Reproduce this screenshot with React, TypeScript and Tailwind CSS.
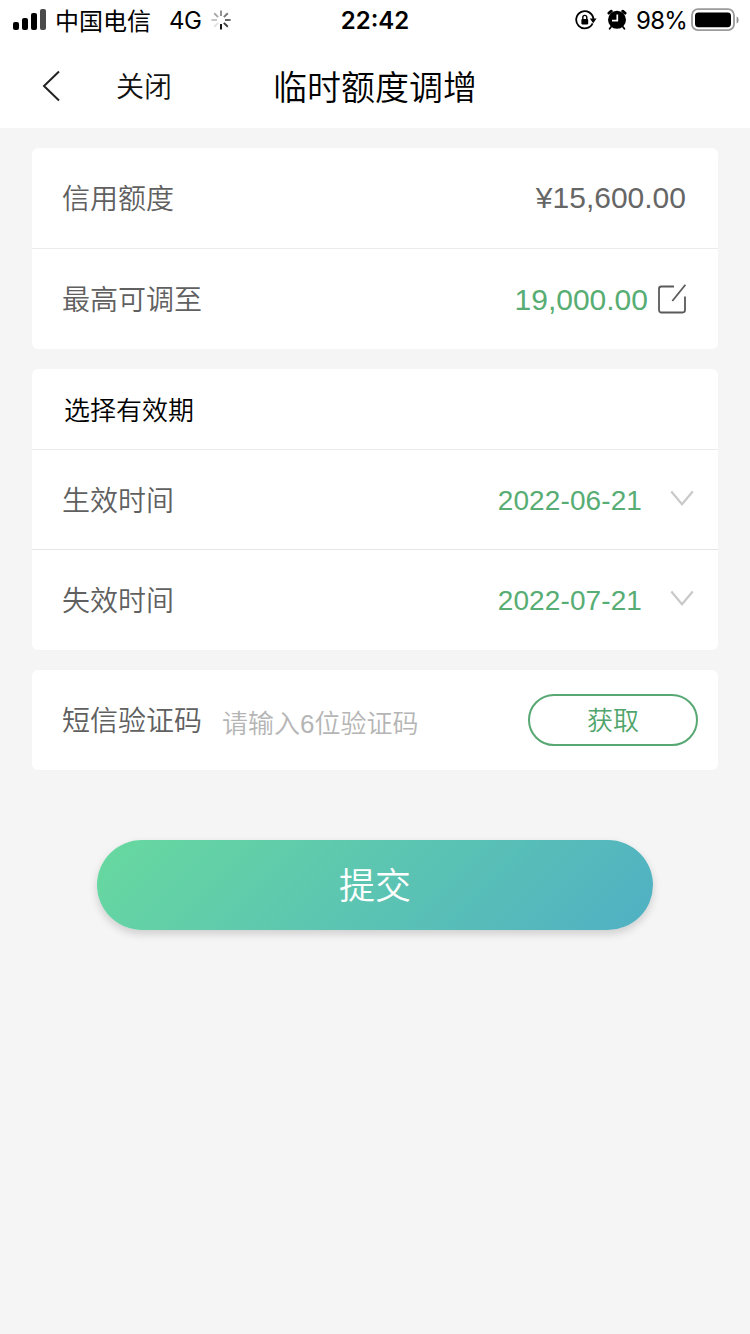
import { JSX, ReactNode } from "react";

// Interface for a date row
interface DateRow {
  id: number;
  label: string;
  value: string;
}

const dateRows: DateRow[] = [
  { id: 1, label: "生效时间", value: "2022-06-21" },
  { id: 2, label: "失效时间", value: "2022-07-21" },
];

// Spokes of the loading spinner, clockwise from the top
const spokes: string[] = [
  "#8e8e8e",
  "#777777",
  "#606060",
  "#3c3c3c",
  "#0a0a0a",
  "#e2e2e2",
  "#c4c4c4",
  "#a8a8a8",
];

function SignalIcon(): JSX.Element {
  return (
    <svg width="34" height="22" viewBox="0 0 34 22" fill="#000">
      <rect x="1" y="13" width="6" height="8" rx="2" />
      <rect x="10" y="9" width="6" height="12" rx="2" />
      <rect x="19" y="4" width="6" height="17" rx="2" />
      <rect x="28" y="0" width="6" height="21" rx="2" fill="#4a4a4a" />
    </svg>
  );
}

function SpinnerIcon(): JSX.Element {
  return (
    <svg width="20" height="20" viewBox="0 0 20 20">
      {spokes.map((color, index) => (
        <line
          key={index}
          x1="10"
          y1="0.4"
          x2="10"
          y2="6"
          stroke={color}
          strokeWidth="1.9"
          transform={`rotate(${index * 45} 10 10)`}
        />
      ))}
    </svg>
  );
}

function RotationLockIcon(): JSX.Element {
  return (
    <svg width="22" height="20" viewBox="0 0 22 20" fill="none">
      <path d="M17.6 13.4A8.600 8.600 0 1 1 18.400 9.200" stroke="#000" strokeWidth="1.800" />
      <path d="M14.800 8.600h6.800l-3.400 4.600z" fill="#000" />
      <rect x="6.400" y="9" width="6.800" height="5.400" rx="0.800" fill="#000" />
      <path d="M7.800 9.400V7.400a2 2 0 0 1 4 0v2" stroke="#000" strokeWidth="1.400" />
    </svg>
  );
}

function AlarmIcon(): JSX.Element {
  return (
    <svg width="20" height="22" viewBox="0 0 20 22" fill="none">
      <circle cx="10" cy="10.800" r="9" fill="#000" />
      <path d="M1.900 4.200 4.300 2.200M18.100 4.200 15.700 2.200" stroke="#000" strokeWidth="2.800" strokeLinecap="round" />
      <path d="m4 18-1.400 1.800M16 18l1.400 1.800" stroke="#000" strokeWidth="1.800" strokeLinecap="round" />
      <path d="M10.300 5.400v6.200H5" stroke="#fff" strokeWidth="1.700" />
    </svg>
  );
}

function BatteryIcon(): JSX.Element {
  return (
    <svg width="49" height="24" viewBox="0 0 49 24" fill="none">
      <rect x="1" y="1.2" width="42" height="21" rx="6" stroke="#9a9a9a" strokeWidth="1.8" />
      <rect x="4" y="4.4" width="36" height="14.8" rx="3.4" fill="#000" />
      <path d="M45.6 8.4c2.6.8 2.6 6.2 0 7z" fill="#8e8e8e" />
    </svg>
  );
}

function EditIcon(): JSX.Element {
  return (
    <svg width="30" height="31" viewBox="0 0 30 31" fill="none" stroke="#5a5a5d" strokeWidth="1.8">
      <path d="M17 2.5H4.400A2.400 2.400 0 0 0 2 4.900v21.200A2.400 2.400 0 0 0 4.400 28.500h21.200a2.400 2.400 0 0 0 2.400-2.400V12.500" />
      <path d="M28.400 0.800 15.300 17" />
    </svg>
  );
}

function ChevronIcon(): JSX.Element {
  return (
    <svg width="24" height="20" viewBox="0 0 24 20" fill="none">
      <path d="M1.300 1.500 12 14.300 22.700 1.500" stroke="#c9c9c9" strokeWidth="2.200" />
    </svg>
  );
}

function Label({ children }: { children: ReactNode }): JSX.Element {
  return <span className="pt-1 text-[28px] leading-10 text-[#606060]">{children}</span>;
}

export default function App(): JSX.Element {
  return (
    <div className="w-[750px] h-[1334px] bg-[#f5f5f5] overflow-hidden font-['Liberation_Sans','Noto_Sans_CJK_SC',sans-serif] font-[350]">
      {/* Status bar and title */}
      <header className="h-32 bg-white">
        <div className="h-10 grid grid-cols-3 items-center text-black">
          <div className="flex items-center pl-3">
            <SignalIcon />
            <span className="ml-[9px] pt-[3px] text-2xl leading-8 font-normal">中国电信</span>
            <span className="ml-[18px] mr-[10px] pt-0.5 text-2xl leading-8 font-['Inter',sans-serif] font-normal tracking-[-0.5px]">
              4G
            </span>
            <SpinnerIcon />
          </div>
          <div className="pt-0.5 text-center text-2xl leading-8 font-semibold font-['Inter',sans-serif]">22:42</div>
          <div className="flex items-center justify-end pr-[10px]">
            <RotationLockIcon />
            <div className="ml-[10px]">
              <AlarmIcon />
            </div>
            <span className="ml-[9px] mr-1 pt-0.5 text-2xl leading-8 font-['Inter',sans-serif] font-normal tracking-[-0.8px]">
              98%
            </span>
            <BatteryIcon />
          </div>
        </div>
        <div className="h-[92px] grid grid-cols-3 items-center">
          <div className="flex items-center pl-[42px]">
            <svg width="20" height="32" viewBox="0 0 20 32" fill="none">
              <path d="M17 1.500 2 16l15 14.500" stroke="#222" strokeWidth="2" />
            </svg>
            <span className="ml-[54px] pt-1 text-[28px] leading-10 text-[#111]">关闭</span>
          </div>
          <h1 className="pt-1 text-center text-[34px] leading-[48px] text-black whitespace-nowrap">临时额度调增</h1>
        </div>
      </header>

      <main className="flex flex-col gap-5 pt-5 pl-8 pr-8">
        {/* Credit limit */}
        <section className="h-[201px] bg-white rounded-md">
          <div className="h-[101px] flex items-center justify-between pl-[30px] pr-8 border-b border-[#ebebeb]">
            <Label>信用额度</Label>
            <span className="text-[30px] leading-10 text-[#666]">¥15,600.00</span>
          </div>
          <div className="h-[100px] flex items-center justify-between pl-[30px] pr-[31px]">
            <Label>最高可调至</Label>
            <div className="flex items-center gap-[9px]">
              <span className="pt-0.5 text-[30px] leading-10 text-[#57ad73]">19,000.00</span>
              <EditIcon />
            </div>
          </div>
        </section>

        {/* Validity period */}
        <section className="h-[281px] bg-white rounded-md">
          <div className="h-[81px] flex items-center pt-1 pl-8 text-[26px] text-black border-b border-[#ebebeb]">选择有效期</div>
          {dateRows.map((row) => (
            <div
              key={row.id}
              className="h-[100px] flex items-center justify-between pl-[30px] pr-6 border-b border-[#e6e6e6] last:border-b-0"
            >
              <Label>{row.label}</Label>
              <div className="flex items-center gap-7">
                <span className="pt-0.5 text-[28px] leading-10 tracking-[0.1px] text-[#57ad73]">{row.value}</span>
                <ChevronIcon />
              </div>
            </div>
          ))}
        </section>

        {/* SMS code */}
        <section className="h-[100px] flex items-center bg-white rounded-md pl-[30px] pr-5">
          <Label>短信验证码</Label>
          <input
            className="ml-5 mt-[9px] w-[260px] h-10 text-[26px] placeholder:text-[#b5b5b5] outline-none"
            placeholder="请输入6位验证码"
          />
          <button className="ml-auto w-[170px] h-[52px] pt-0.5 rounded-full border-2 border-[#57a873] text-[26px] leading-10 text-[#4fa56c]">
            获取
          </button>
        </section>
      </main>

      <div className="flex justify-center pt-[70px]">
        <button className="w-[556px] h-[90px] pt-1 rounded-full bg-[linear-gradient(135deg,#68d99f_0%,#50b0c4_100%)] shadow-[0_4px_8px_rgba(0,0,0,0.16)] text-4xl text-white">
          提交
        </button>
      </div>
    </div>
  );
}
